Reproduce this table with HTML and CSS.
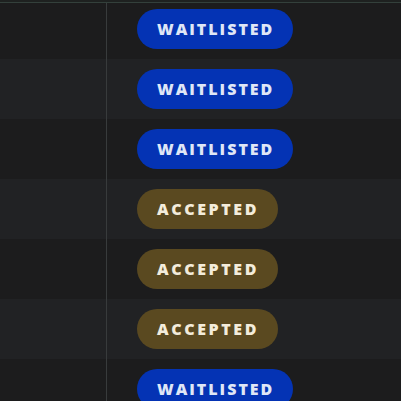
FILE: index.html
```html
<!DOCTYPE html>
<html lang="en">
<head>
  <meta charset="UTF-8">
  <title>Applications</title>
  <link rel="stylesheet" href="styles.css">
</head>
<body>

  <div class="table-top"></div>

  <!-- status rows -->
  <div class="rows">
    <div class="row first">
      <div class="cell name"></div>
      <div class="cell status"><span class="pill waitlisted">WAITLISTED</span></div>
    </div>
    <div class="row">
      <div class="cell name"></div>
      <div class="cell status"><span class="pill waitlisted">WAITLISTED</span></div>
    </div>
    <div class="row">
      <div class="cell name"></div>
      <div class="cell status"><span class="pill waitlisted">WAITLISTED</span></div>
    </div>
    <div class="row">
      <div class="cell name"></div>
      <div class="cell status"><span class="pill accepted">ACCEPTED</span></div>
    </div>
    <div class="row">
      <div class="cell name"></div>
      <div class="cell status"><span class="pill accepted">ACCEPTED</span></div>
    </div>
    <div class="row">
      <div class="cell name"></div>
      <div class="cell status"><span class="pill accepted">ACCEPTED</span></div>
    </div>
    <div class="row">
      <div class="cell name"></div>
      <div class="cell status"><span class="pill waitlisted">WAITLISTED</span></div>
    </div>
  </div>

</body>
</html>
```

FILE: styles.css
```css
body {
  margin: 0;
  background-color: #1c1c1d;
  font-family: 'Open Sans', 'Liberation Sans', sans-serif;
  overflow: hidden;
}

.table-top {
  height: 2px;
  background-color: #1e2120;
  border-bottom: 1px solid #33403b;
}

.rows {
  display: flex;
  flex-direction: column;
}

.row {
  display: flex;
  height: 60px;
  background-color: #1c1c1d;
}

.row:nth-child(even) {
  background-color: #212224;
}

.row.first {
  height: 56px;
}

.cell {
  display: flex;
  align-items: center;
}

.name {
  width: 106px;
  border-right: 1px solid #383b3c;
}

.status {
  flex: 1;
  padding-left: 30px;
}

.row.first .status {
  align-items: flex-start;
  padding-top: 6px;
}

.pill {
  display: inline-block;
  height: 40px;
  line-height: 40px;
  padding: 0 19px 0 20px;
  border-radius: 20px;
  font-size: 16px;
  font-weight: 800;
  letter-spacing: 2px;
}

.waitlisted {
  background-color: #0433b4;
  color: #dfe6f6;
}

.accepted {
  background-color: #5a4920;
  color: #f3ecdb;
  letter-spacing: 2.6px;
}
```
